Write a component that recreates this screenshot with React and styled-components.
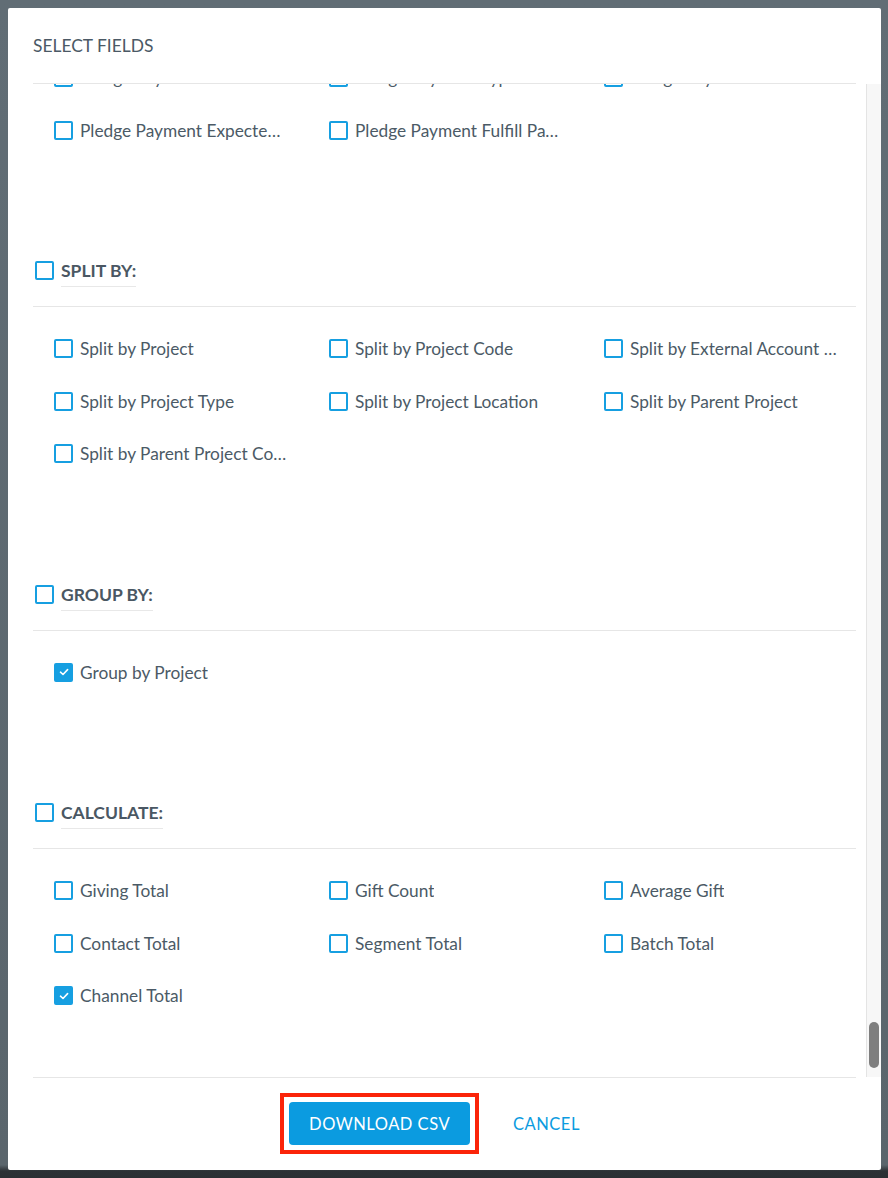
import React, { useLayoutEffect, useRef } from "react";
import styled, { createGlobalStyle } from "styled-components";

const GlobalStyle = createGlobalStyle`
  html, body {
    margin: 0;
    padding: 0;
  }
  body {
    font-family: Lato, "Open Sans", "Liberation Sans", sans-serif;
    background: #5e6a71;
  }
  * {
    box-sizing: border-box;
  }
`;

const sections = [
  {
    title: "PLEDGE FIELDS:",
    items: [
      { label: "Pledge Payment Status" },
      { label: "Pledge Payment Type" },
      { label: "Pledge Payment Amount" },
      { label: "Pledge Payment Expected Date" },
      { label: "Pledge Payment Fulfill Payment" },
    ],
  },
  {
    title: "SPLIT BY:",
    items: [
      { label: "Split by Project" },
      { label: "Split by Project Code" },
      { label: "Split by External Account ID" },
      { label: "Split by Project Type" },
      { label: "Split by Project Location" },
      { label: "Split by Parent Project" },
      { label: "Split by Parent Project Code" },
    ],
  },
  {
    title: "GROUP BY:",
    items: [{ label: "Group by Project", checked: true }],
  },
  {
    title: "CALCULATE:",
    items: [
      { label: "Giving Total" },
      { label: "Gift Count" },
      { label: "Average Gift" },
      { label: "Contact Total" },
      { label: "Segment Total" },
      { label: "Batch Total" },
      { label: "Channel Total", checked: true },
    ],
  },
];

const Checkbox = ({ checked }) => (
  <Box checked={checked}>
    {checked && (
      <svg width="12" height="12" viewBox="0 0 12 12">
        <polyline
          points="2.5,6.2 5,8.5 9.6,3.6"
          fill="none"
          stroke="#fff"
          strokeWidth="1.6"
          strokeLinecap="round"
          strokeLinejoin="round"
        />
      </svg>
    )}
  </Box>
);

const Section = ({ title, items }) => (
  <SectionBlock>
    <SectionHead>
      <Checkbox />
      <HeadLabel>{title}</HeadLabel>
    </SectionHead>
    <FieldGrid>
      {items.map((item) => (
        <Field key={item.label}>
          <Checkbox checked={item.checked} />
          <FieldLabel>{item.label}</FieldLabel>
        </Field>
      ))}
    </FieldGrid>
  </SectionBlock>
);

export default function App() {
  const listRef = useRef(null);

  useLayoutEffect(() => {
    const el = listRef.current;
    if (el) el.scrollTop = el.scrollHeight;
  }, []);

  return (
    <>
      <GlobalStyle />
      <Backdrop>
        <Modal>
          <Header>
            <Title>SELECT FIELDS</Title>
          </Header>
          <Body>
            <FieldList ref={listRef}>
              {sections.map((s) => (
                <Section key={s.title} title={s.title} items={s.items} />
              ))}
            </FieldList>
            <ScrollTrack>
              <ScrollThumb />
            </ScrollTrack>
          </Body>
          <Footer>
            <Highlight>
              <PrimaryButton>DOWNLOAD CSV</PrimaryButton>
            </Highlight>
            <TextButton>CANCEL</TextButton>
          </Footer>
        </Modal>
      </Backdrop>
    </>
  );
}

const Backdrop = styled.div`
  width: 888px;
  height: 1178px;
  padding: 8px 7px 8px 8px;
  background: linear-gradient(
    to bottom,
    #616d75 0,
    #5a656c 1165px,
    #2c3135 1171px,
    #2a2f33 100%
  );
`;

const Modal = styled.div`
  height: 1162px;
  background: #fff;
  display: flex;
  flex-direction: column;
  border-radius: 2px;
`;

const Header = styled.div`
  flex: 0 0 auto;
  height: 76px;
  margin: 0 25px;
  padding-top: 1px;
  display: flex;
  align-items: center;
  border-bottom: 1px solid #e6e6e6;
`;

const Title = styled.h2`
  margin: 0;
  font-size: 17.4px;
  font-weight: 400;
  line-height: 20px;
  color: #4b5965;
`;

const Body = styled.div`
  flex: 1 1 auto;
  min-height: 0;
  display: flex;
`;

const FieldList = styled.div`
  flex: 1 1 auto;
  min-width: 0;
  overflow-y: auto;
  padding: 0 10px 0 25px;
  scrollbar-width: none;
  &::-webkit-scrollbar {
    display: none;
  }
`;

const ScrollTrack = styled.div`
  flex: 0 0 15px;
  background: #f7f7f7;
  border-left: 1px solid #e4e4e4;
  display: flex;
  flex-direction: column;
  justify-content: flex-end;
  align-items: center;
  padding: 0 1px 9px 0;
`;

const ScrollThumb = styled.div`
  width: 10px;
  height: 46px;
  border-radius: 5px;
  background: #7f7f7f;
`;

const SectionBlock = styled.section`
  padding-bottom: 71.5px;
`;

const SectionHead = styled.div`
  display: flex;
  align-items: flex-start;
  gap: 7px;
  padding: 49px 0 19px 2px;
  border-bottom: 1px solid #e6e6e6;

  & > span:first-child {
    margin-top: 1px;
  }
`;

const HeadLabel = styled.div`
  font-size: 17.5px;
  font-weight: 700;
  line-height: 21px;
  color: #4a5763;
  padding-bottom: 5px;
  border-bottom: 1px solid #e8e8e8;
`;

const FieldGrid = styled.div`
  display: grid;
  grid-template-columns: repeat(3, 275px);
  row-gap: 33.5px;
  padding: 32px 0 0 21px;
`;

const Field = styled.label`
  display: flex;
  align-items: center;
  gap: 7px;
  height: 19px;
  cursor: pointer;
`;

const Box = styled.span`
  flex: 0 0 auto;
  width: 19px;
  height: 19px;
  border: 2px solid #169fe1;
  border-radius: 2px;
  background: ${({ checked }) => (checked ? "#169fe1" : "#fff")};
  display: flex;
  align-items: center;
  justify-content: center;
`;

const FieldLabel = styled.span`
  max-width: 208px;
  font-size: 17.3px;
  line-height: 21px;
  color: #4b5a66;
  white-space: nowrap;
  overflow: hidden;
  text-overflow: ellipsis;
`;

const Footer = styled.div`
  flex: 0 0 auto;
  height: 93px;
  margin: 0 25px;
  border-top: 1px solid #e6e6e6;
  display: flex;
  align-items: center;
  justify-content: center;
  gap: 23px;
  padding-bottom: 1px;
`;

const Highlight = styled.span`
  display: inline-flex;
  margin: -9px;
  padding: 5px;
  border: 4px solid #fb2409;
`;

const PrimaryButton = styled.button`
  height: 43px;
  padding: 0 20px;
  border: none;
  border-radius: 4px;
  background: #0b9be0;
  color: #fff;
  font-family: inherit;
  font-size: 16.5px;
  letter-spacing: 0.5px;
  cursor: pointer;
`;

const TextButton = styled.button`
  height: 43px;
  padding: 0 20px;
  border: none;
  background: transparent;
  color: #0b9be0;
  font-family: inherit;
  font-size: 16.5px;
  letter-spacing: 0.5px;
  cursor: pointer;
`;
